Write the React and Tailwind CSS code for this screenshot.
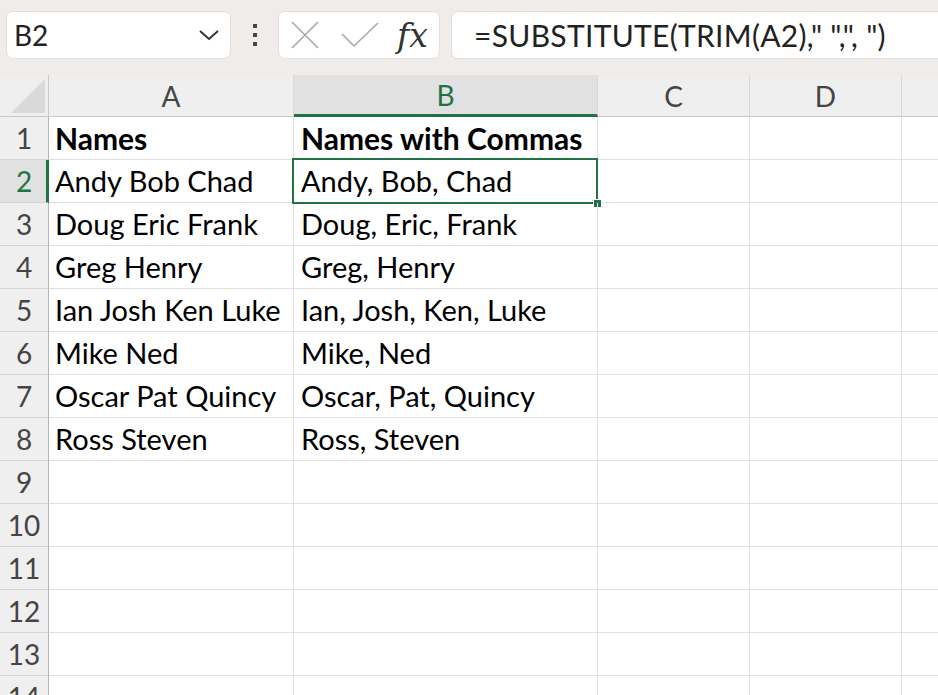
import React from "react";

const rowsData = [
  ["Names", "Names with Commas", true],
  ["Andy Bob Chad", "Andy, Bob, Chad"],
  ["Doug Eric Frank", "Doug, Eric, Frank"],
  ["Greg Henry", "Greg, Henry"],
  ["Ian Josh Ken Luke", "Ian, Josh, Ken, Luke"],
  ["Mike Ned", "Mike, Ned"],
  ["Oscar Pat Quincy", "Oscar, Pat, Quincy"],
  ["Ross Steven", "Ross, Steven"],
  ["", ""],
  ["", ""],
  ["", ""],
  ["", ""],
  ["", ""],
  ["", ""],
];

const font = { fontFamily: "Lato, 'Open Sans', sans-serif" };

export default function App() {
  return (
    <div className="w-[938px] h-[695px] overflow-hidden bg-white flex flex-col" style={font}>
      {/* toolbar */}
      <div className="h-[75px] shrink-0 bg-[#efecea] flex items-start pt-[11px] pl-[6px]">
        <div className="w-[225px] h-[48px] bg-white rounded-[7px] border border-[#e2e0de] flex items-center justify-between pl-[7px] pr-[10px]">
          <span className="text-[28px] text-[#222]">B2</span>
          <svg width="22" height="14" viewBox="0 0 22 14">
            <path d="M2 3 L11 11 L20 3" fill="none" stroke="#333" strokeWidth="2" />
          </svg>
        </div>
        <div className="w-[47px] h-[48px] flex flex-col items-center justify-center gap-[5px]">
          <div className="w-[4px] h-[4px] bg-[#444]" />
          <div className="w-[4px] h-[4px] bg-[#444]" />
          <div className="w-[4px] h-[4px] bg-[#444]" />
        </div>
        <div className="w-[162px] h-[48px] bg-white rounded-[7px] border border-[#e2e0de] flex items-center pl-[12px]">
          <svg width="28" height="28" viewBox="0 0 28 28">
            <path d="M1 1 L27 27 M27 1 L1 27" stroke="#a8a8a8" strokeWidth="1.6" fill="none" />
          </svg>
          <svg width="38" height="26" viewBox="0 0 38 26" className="ml-[22px]">
            <path d="M1 12 L13 24 L37 1" stroke="#a8a8a8" strokeWidth="1.6" fill="none" />
          </svg>
          <span
            className="ml-[18px] text-[33px] italic text-[#333] leading-none"
            style={{ fontFamily: "'DejaVu Serif', 'Liberation Serif', serif" }}
          >
            fx
          </span>
        </div>
        <div className="ml-[11px] flex-1 h-[48px] bg-white rounded-l-[7px] border border-r-0 border-[#e2e0de] flex items-center pl-[22px]">
          <span className="text-[30px] tracking-[0.3px] text-[#222] whitespace-pre">=SUBSTITUTE(TRIM(A2),&quot; &quot;,&quot;, &quot;)</span>
        </div>
      </div>

      {/* column header */}
      <div className="h-[42px] shrink-0 flex bg-[#efefef] text-[28px] text-[#444]">
        <div className="w-[49px] h-full border-r border-b border-[#c8c8c8] relative">
          <svg width="35" height="35" viewBox="0 0 35 35" className="absolute left-[11px] top-[4px]">
            <path d="M34 0 L34 34 L0 34 Z" fill="#d9d9d9" />
          </svg>
        </div>
        <div className="w-[245px] h-full border-r border-b border-r-[#d9d9d9] border-b-[#c8c8c8] flex items-center justify-center">A</div>
        <div className="w-[304px] h-full bg-[#e1e1e1] border-b-[3px] border-[#217346] flex items-center justify-center text-[#217346] border-r border-r-[#d9d9d9]">B</div>
        <div className="w-[152px] h-full border-r border-b border-r-[#d9d9d9] border-b-[#c8c8c8] flex items-center justify-center">C</div>
        <div className="w-[152px] h-full border-r border-b border-r-[#d9d9d9] border-b-[#c8c8c8] flex items-center justify-center">D</div>
        <div className="flex-1 h-full border-b border-[#c8c8c8]" />
      </div>

      {/* rows */}
      <div className="flex flex-col relative">
        {rowsData.map((r, i) => {
          const sel = i === 1;
          return (
            <div key={i} className="h-[43px] shrink-0 flex text-[29px] text-black">
              <div
                className={
                  sel
                    ? "w-[49px] h-full bg-[#e1e1e1] border-r-[3px] border-r-[#217346] border-b border-b-[#d4d4d4] flex items-center justify-center pl-[2px] text-[28px] text-[#217346]"
                    : "w-[49px] h-full bg-[#efefef] border-r border-r-[#b5b5b5] border-b border-b-[#d4d4d4] flex items-center justify-center text-[28px] text-[#444]"
                }
              >
                {i + 1}
              </div>
              <div className={"w-[245px] h-full border-r border-b border-[#e1e1e1] flex items-center pl-[6px] whitespace-nowrap " + (r[2] ? "font-bold text-[30px]" : "")}>
                {r[0]}
              </div>
              <div className={"w-[304px] h-full border-r border-b border-[#e1e1e1] flex items-center pl-[7px] whitespace-nowrap relative " + (r[2] ? "font-bold text-[30px]" : "")}>
                {r[1]}
                {sel && (
                  <div className="absolute left-[-2px] top-[-2px] w-[306px] h-[46px] border-2 border-[#217346]">
                    <div className="absolute right-[-6px] bottom-[-6px] w-[9px] h-[9px] bg-[#217346] border border-white" />
                  </div>
                )}
              </div>
              <div className="w-[152px] h-full border-r border-b border-[#e1e1e1]" />
              <div className="w-[152px] h-full border-r border-b border-[#e1e1e1]" />
              <div className="flex-1 h-full border-b border-[#e1e1e1]" />
            </div>
          );
        })}
      </div>
    </div>
  );
}
